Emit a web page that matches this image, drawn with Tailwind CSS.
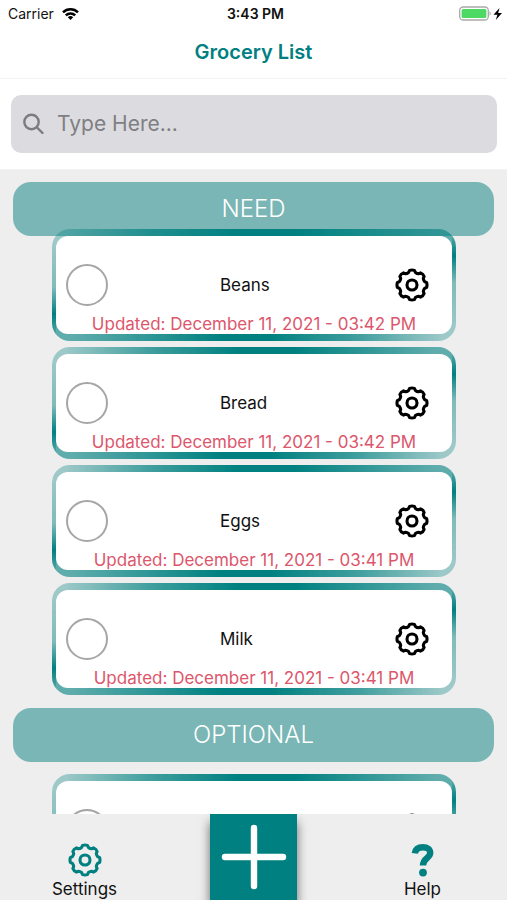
<!DOCTYPE html>
<html lang="en">
<head>
  <meta charset="UTF-8" />
  <meta name="viewport" content="width=device-width, initial-scale=1.0" />
  <title>Grocery List</title>
  <script src="https://cdn.jsdelivr.net/npm/@tailwindcss/browser@4"></script>
</head>
<body class="bg-[#eeeeee] text-[#111111] font-['Inter',sans-serif] h-screen flex flex-col overflow-hidden">

  <!-- Shared icons -->
  <svg class="hidden" aria-hidden="true">
    <symbol id="gear" viewBox="-17 -17 34 34">
      <g fill="none" stroke="currentColor" stroke-width="3.1" stroke-linejoin="round">
        <path d="M-2.4 -14.6Q0 -15.4 2.4 -14.6L3.4 -12.6Q5 -11.4 6.5 -11.3L8.6 -12.1Q11.2 -11.2 12.1 -8.6L11.3 -6.5Q11.4 -5 12.6 -3.4L14.6 -2.4Q15.4 0 14.6 2.4L12.6 3.4Q11.4 5 11.3 6.5L12.1 8.6Q11.2 11.2 8.6 12.1L6.5 11.3Q5 11.4 3.4 12.6L2.4 14.6Q0 15.4 -2.4 14.6L-3.4 12.6Q-5 11.4 -6.5 11.3L-8.6 12.1Q-11.2 11.2 -12.1 8.6L-11.3 6.5Q-11.4 5 -12.6 3.4L-14.6 2.4Q-15.4 0 -14.6 -2.4L-12.6 -3.4Q-11.4 -5 -11.3 -6.5L-12.1 -8.6Q-11.2 -11.2 -8.6 -12.1L-6.5 -11.3Q-5 -11.4 -3.4 -12.6Z" />
        <circle r="5" />
      </g>
    </symbol>
  </svg>

  <header class="bg-white border-b border-[#f2f2f2] shrink-0">
    <!-- Status bar -->
    <div class="grid grid-cols-3 items-center h-7 px-2 pr-1 text-sm">
      <div class="flex items-center gap-2">
        <span>Carrier</span>
        <svg class="w-[17px] h-3" viewBox="0 0 17 12" fill="none" stroke="#000" stroke-width="2.5">
          <path d="M1 4.4A10.6 10.6 0 0 1 16 4.4" />
          <path d="M3.8 7.4A6.7 6.7 0 0 1 13.2 7.4" />
          <path d="M8.5 12L5.8 9.3A3.8 3.8 0 0 1 11.2 9.3Z" fill="#000" stroke="none" />
        </svg>
      </div>
      <span class="text-center font-semibold">3:43 PM</span>
      <svg class="w-[44px] h-4 justify-self-end" viewBox="0 0 44 16">
        <rect x="0.7" y="1" width="28.6" height="13" rx="3.5" fill="#fff" stroke="#a9a9a9" stroke-width="1.3" />
        <rect x="2.6" y="3" width="24.8" height="9" rx="1.5" fill="#4cd964" />
        <path d="M30.5 5Q33 7.5 30.5 10Z" fill="#a9a9a9" />
        <path d="M40.5 2L34.5 8.8H38.4L36.8 14L43 7H39.2Z" fill="#000" />
      </svg>
    </div>
    <h1 class="h-[50px] leading-[48px] text-center text-xl font-semibold text-[#008080]">Grocery List</h1>
  </header>

  <form class="bg-white border-b border-[#f2f2f2] px-[11px] py-4 pr-[10px] shrink-0">
    <label class="flex items-center gap-3 h-[58px] px-3 rounded-[10px] bg-[#dcdce0]">
      <svg class="w-[22px] h-[22px] shrink-0" viewBox="0 0 22 22" fill="none" stroke="#7c7c80" stroke-width="2.4" stroke-linecap="round" aria-label="Search">
        <circle cx="8.5" cy="9" r="7.2" />
        <path d="M14 14.5L19.5 20" />
      </svg>
      <input type="text" placeholder="Type Here..." class="flex-1 min-w-0 text-[21px] placeholder-[#7f7f83] focus:outline-none" />
    </label>
  </form>

  <main id="lists" class="flex-1 min-h-0 overflow-hidden px-[13px] pt-3"></main>

  <footer class="grid grid-cols-3 h-[86px] shrink-0 overflow-hidden text-[17px] leading-5">
    <a href="#settings" class="flex flex-col items-center justify-end pb-px">
      <svg class="w-[34px] h-[34px] mb-0.5 text-[#008080]"><use href="#gear" /></svg>
      Settings
    </a>
    <button type="button" aria-label="Add item" class="justify-self-center w-[87px] bg-[#008080] flex justify-center pt-2.5 shadow-[0_8px_10px_rgba(0,0,0,0.55)]">
      <svg class="w-[66px] h-[66px]" viewBox="0 0 66 66" stroke="#fff" stroke-width="6.4" stroke-linecap="round">
        <path d="M33 4V62M4 33H62" />
      </svg>
    </button>
    <a href="#help" class="flex flex-col items-center justify-end pb-px">
      <svg class="w-6 h-[34px] mb-0.5 text-[#008080]" viewBox="0 0 24 34" fill="none">
        <path d="M3.8 10.4C4.4 6.2 7.6 4.2 12 4.2C16.4 4.2 19.2 6.4 19.2 9.8C19.2 15.4 12 14.6 12 22.6" stroke="currentColor" stroke-width="6.4" />
        <circle cx="12" cy="29.6" r="3.9" fill="currentColor" />
      </svg>
      Help
    </a>
  </footer>

  <script>
    const lists = [
      {
        title: 'NEED',
        listClass: '-mt-[7px] mb-[13px]',
        items: [
          { name: 'Beans', updated: 'December 11, 2021 - 03:42 PM' },
          { name: 'Bread', updated: 'December 11, 2021 - 03:42 PM' },
          { name: 'Eggs', updated: 'December 11, 2021 - 03:41 PM' },
          { name: 'Milk', updated: 'December 11, 2021 - 03:41 PM' },
        ],
      },
      {
        title: 'OPTIONAL',
        listClass: 'mt-3',
        items: [{ name: '', updated: '' }],
      },
    ];

    // Card frame: the side strips, then the top and bottom halves, each with its own gradient
    function renderItem(item) {
      return `
        <li class="rounded-[18px] px-1 py-[7px] [background:linear-gradient(to_bottom,#00808055_10%,#00808077_52%,#008080_76%,#008080aa_94%)_left/4px_100%_no-repeat,linear-gradient(to_bottom,#008080aa_6%,#008080_24%,#00808077_48%,#00808055_90%)_right/4px_100%_no-repeat,linear-gradient(to_right,#00808055_2%,#008080bb_24%,#008080_46%,#008080_60%,#00808099_96%)_top/calc(100%-8px)_50%_no-repeat,linear-gradient(to_right,#00808099_4%,#008080_42%,#008080_54%,#008080bb_76%,#00808055_98%)_bottom/calc(100%-8px)_50%_no-repeat]">
          <div class="bg-white rounded-[12px] pt-7">
            <div class="flex items-center pl-2.5 pr-[23px]">
              <input type="checkbox" aria-label="${item.name || 'Item'}" class="appearance-none w-[42px] h-[42px] rounded-full border-2 border-[#a6a6a6] checked:bg-[#008080]" />
              <span class="flex-1 pl-28 text-[17px] leading-5">${item.name}</span>
              <button type="button" aria-label="Edit item" class="text-black">
                <svg class="w-[34px] h-[34px]"><use href="#gear" /></svg>
              </button>
            </div>
            <p class="mt-2 h-5 text-center text-[17px] leading-5 text-[#dc566c]">${item.updated && 'Updated: ' + item.updated}</p>
          </div>
        </li>`;
    }

    document.getElementById('lists').innerHTML = lists.map(list => `
      <section>
        <h2 class="h-[54px] leading-[54px] rounded-[18px] bg-[#79b6b5] text-center text-2xl font-light text-white">${list.title}</h2>
        <ul class="flex flex-col gap-1.5 px-[39px] pr-[38px] ${list.listClass}">${list.items.map(renderItem).join('')}</ul>
      </section>`).join('');
  </script>
</body>
</html>
